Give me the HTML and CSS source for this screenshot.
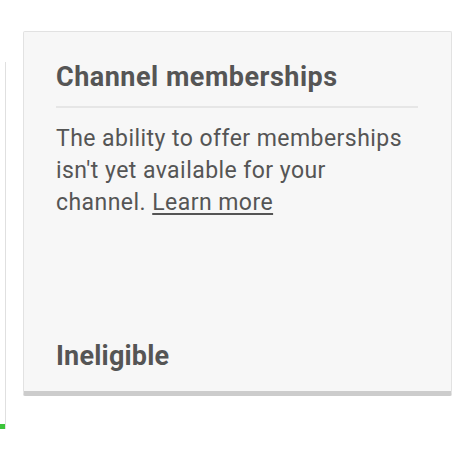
FILE: index.html
```html
<!DOCTYPE html>
<html>
<head>
<meta charset="utf-8">
<link rel="stylesheet" href="styles.css">
</head>
<body>
<div class="row">
  <div class="side-card"><div class="progress"></div></div>
  <div class="card">
    <h2 class="card-title">Channel memberships</h2>
    <p class="card-text">The ability to offer memberships isn't yet available for your channel. <a class="link" href="#">Learn more</a></p>
    <div class="card-status">Ineligible</div>
  </div>
</div>
</body>
</html>
```
FILE: styles.css
```css
html, body {
  margin: 0;
  padding: 0;
  background: #ffffff;
}
body {
  font-family: Roboto, "Liberation Sans", Arial, sans-serif;
  color: #555555;
}
.row {
  display: flex;
  align-items: flex-start;
  gap: 17px;
}
.side-card {
  margin-top: 62px;
  width: 5px;
  height: 367px;
  border-right: 1px solid #e0e0e0;
  display: flex;
  flex-direction: column;
  justify-content: flex-end;
}
.progress {
  height: 5px;
  background: #3cc43a;
}
.card {
  margin-top: 31px;
  height: 359px;
  box-sizing: content-box;
  background: #f7f7f7;
  border: 1px solid #e2e2e2;
  border-bottom: 5px solid #cccccc;
  border-radius: 2px;
  padding: 0 33px 0 32px;
  width: 362px;
  display: flex;
  flex-direction: column;
}
.card-title {
  margin: 0;
  padding: 30px 0 14px;
  font-size: 27px;
  line-height: 30px;
  font-weight: 700;
  letter-spacing: 0.5px;
  white-space: nowrap;
  border-bottom: 2px solid #e6e6e6;
}
.card-text {
  margin: 15px 0 0;
  font-size: 23px;
  line-height: 32px;
  font-weight: 400;
  letter-spacing: 0.45px;
}
.link {
  color: #555555;
  text-decoration: underline;
  text-underline-offset: 3px;
}
.card-status {
  margin-top: auto;
  padding-bottom: 20px;
  font-size: 27px;
  line-height: 30px;
  font-weight: 700;
  letter-spacing: 0.2px;
}
```
